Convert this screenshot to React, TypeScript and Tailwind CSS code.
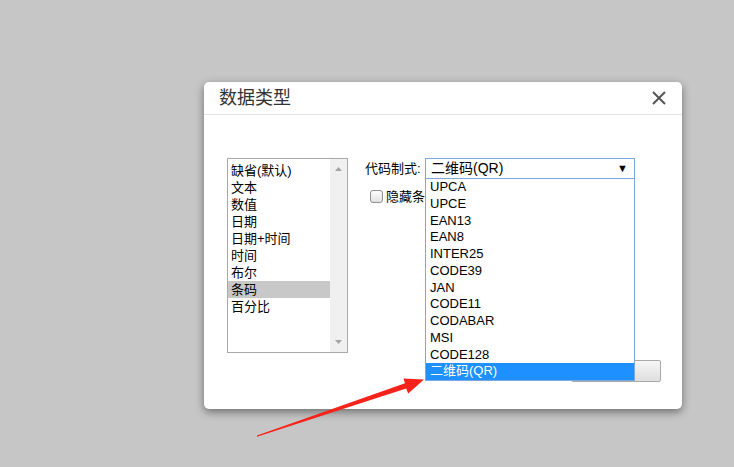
import React from 'react';

const types = ['缺省(默认)', '文本', '数值', '日期', '日期+时间', '时间', '布尔', '条码', '百分比'];
const codes = ['UPCA', 'UPCE', 'EAN13', 'EAN8', 'INTER25', 'CODE39', 'JAN', 'CODE11', 'CODABAR', 'MSI', 'CODE128', '二维码(QR)'];

const font = { fontFamily: '"Liberation Sans", "Noto Sans CJK SC", sans-serif' };

export default function App() {
    return (
        <div className="relative w-[734px] h-[467px] bg-[#c6c6c6] overflow-hidden pt-[82px] pl-[204px]" style={font}>
            {/* Dialog */}
            <div className="w-[478px] h-[327px] bg-white rounded-[5px] shadow-[0_3px_9px_rgba(0,0,0,0.45)] flex flex-col">
                {/* Header */}
                <div className="h-[33px] border-b border-[#e3e3e3] flex items-center justify-between pl-[15px] pr-[15px]">
                    <span className="text-[18px] text-[#333] leading-none">数据类型</span>
                    <svg width="14" height="14" viewBox="0 0 14 14" className="mr-[1px]">
                        <path d="M1 1 L13 13 M13 1 L1 13" stroke="#555" strokeWidth="2" />
                    </svg>
                </div>

                {/* Body */}
                <div className="flex pl-[23px] pt-[43px]">
                    {/* Type listbox */}
                    <div className="w-[121px] h-[195px] border border-[#a9a9a9] flex">
                        <div className="flex-1 pt-[3px]">
                            {types.map((t) => (
                                <div
                                    key={t}
                                    className={`h-[17px] leading-[17px] text-[13px] text-black pl-[3px] ${t === '条码' ? 'bg-[#c8c8c8]' : ''}`}
                                >
                                    {t}
                                </div>
                            ))}
                        </div>
                        <div className="w-[17px] bg-[#f0f0f0] flex flex-col items-center justify-between py-[8px]">
                            <svg width="7" height="4" viewBox="0 0 7 4"><path d="M0 4 L3.5 0 L7 4 Z" fill="#a3a3a3" /></svg>
                            <svg width="7" height="4" viewBox="0 0 7 4"><path d="M0 0 L3.5 4 L7 0 Z" fill="#a3a3a3" /></svg>
                        </div>
                    </div>

                    {/* Right column */}
                    <div className="ml-[17px] flex flex-col">
                        <div className="flex items-center h-[21px]">
                            <span className="w-[60px] text-[13px] text-black">代码制式:</span>
                            <div className="relative">
                                <div className="w-[210px] h-[21px] border border-[#7ea6e0] flex items-center justify-between pl-[5px] pr-[6px]">
                                    <span className="text-[14px] text-black">二维码(QR)</span>
                                    <span className="text-[11px] text-black leading-none">▼</span>
                                </div>
                                {/* Open dropdown */}
                                <div className="absolute left-0 top-full w-[210px] bg-white border border-[#7ea6e0] border-t-0 z-10">
                                    {codes.map((c) => (
                                        <div
                                            key={c}
                                            className={`h-[16.75px] leading-[16.75px] text-[13px] pl-[4px] ${c === '二维码(QR)' ? 'bg-[#1e90ff] text-white' : 'text-black'}`}
                                        >
                                            {c}
                                        </div>
                                    ))}
                                </div>
                            </div>
                        </div>
                        <div className="flex items-center mt-[8px] ml-[5px]">
                            <span className="w-[13px] h-[13px] border border-[#8f8f8f] rounded-[3px] bg-gradient-to-b from-[#fdfdfd] to-[#e2e2e2]" />
                            <span className="ml-[3px] w-[39px] overflow-hidden whitespace-nowrap text-[13px] text-black">隐藏条码</span>
                        </div>
                        <div className="flex justify-end mt-[153px] mr-[-26px]">
                            <div className="w-[90px] h-[22px] border border-[#a9a9a9] rounded-[2px] bg-gradient-to-b from-[#f6f6f6] to-[#dedede]" />
                        </div>
                    </div>
                </div>
            </div>

            {/* Red annotation arrow */}
            <svg className="absolute left-0 top-0 z-20" width="734" height="467" viewBox="0 0 734 467">
                <polygon
                    points="257,436.8 406.2,388.5 408.2,393.5 424,379.5 403.4,378.6 405,383.2 257,435.6"
                    fill="#f5231a"
                />
            </svg>
        </div>
    );
}
